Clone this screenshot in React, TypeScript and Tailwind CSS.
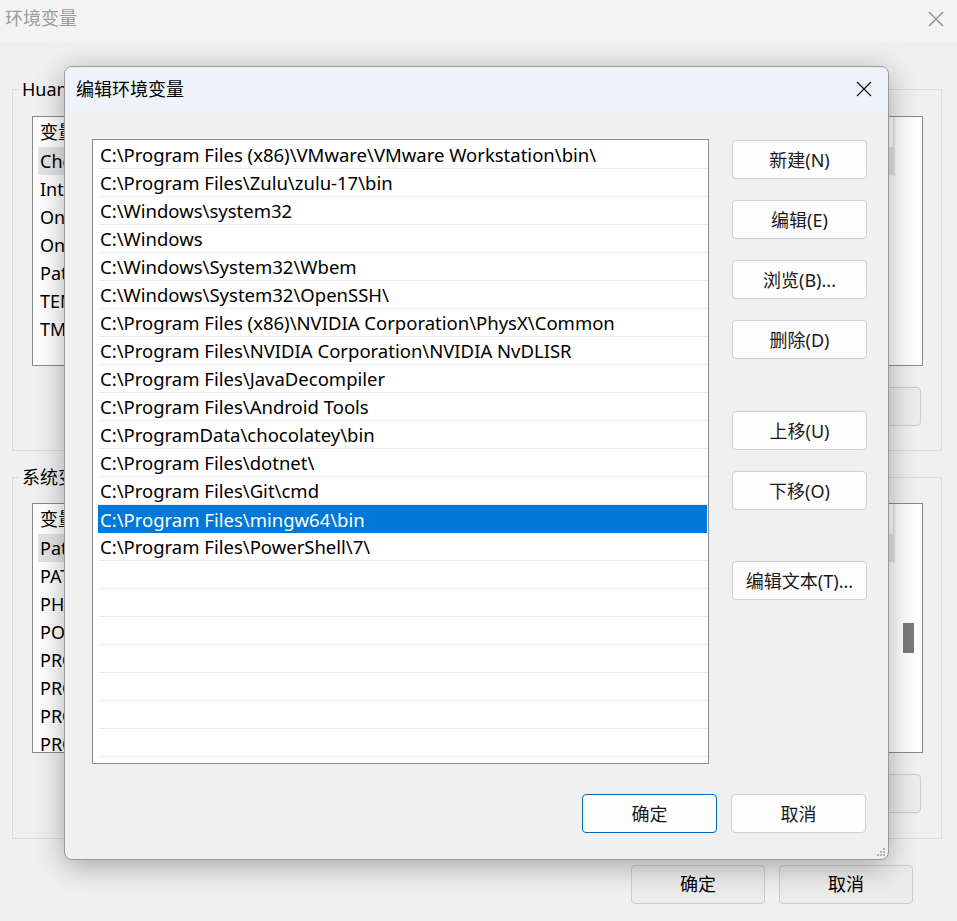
import React from "react";

const FONT = '"Microsoft YaHei UI", "Noto Sans", "Noto Sans CJK SC", sans-serif';

const paths: string[] = [
  "C:\\Program Files (x86)\\VMware\\VMware Workstation\\bin\\",
  "C:\\Program Files\\Zulu\\zulu-17\\bin",
  "C:\\Windows\\system32",
  "C:\\Windows",
  "C:\\Windows\\System32\\Wbem",
  "C:\\Windows\\System32\\OpenSSH\\",
  "C:\\Program Files (x86)\\NVIDIA Corporation\\PhysX\\Common",
  "C:\\Program Files\\NVIDIA Corporation\\NVIDIA NvDLISR",
  "C:\\Program Files\\JavaDecompiler",
  "C:\\Program Files\\Android Tools",
  "C:\\ProgramData\\chocolatey\\bin",
  "C:\\Program Files\\dotnet\\",
  "C:\\Program Files\\Git\\cmd",
  "C:\\Program Files\\mingw64\\bin",
  "C:\\Program Files\\PowerShell\\7\\",
];

const rows: string[] = [...paths, ...Array(8).fill("")];

const userVars = ["ChocolateyLastPathUpdate", "IntelliJ IDEA", "OneDrive", "OneDriveConsumer", "Path", "TEMP", "TMP"];
const sysVars = [
  "Path",
  "PATHEXT",
  "PHP_HOME",
  "POWERSHELL_DISTRIBUTION_CHANNEL",
  "PROCESSOR_ARCHITECTURE",
  "PROCESSOR_IDENTIFIER",
  "PROCESSOR_LEVEL",
  "PROCESSOR_REVISION",
];

function CloseIcon({ color, size }: { color: string; size: number }) {
  return (
    <svg width={size} height={size} viewBox="0 0 16 16" fill="none">
      <path d="M1 1L15 15M15 1L1 15" stroke={color} strokeWidth="1.3" />
    </svg>
  );
}

function BgList({ items, h }: { items: string[]; h: string }) {
  return (
    <div className={`relative w-[891px] ${h} border border-[#8a8a8a] bg-white overflow-hidden`}>
      <div className="h-[30px] flex items-center pl-[7px] text-[18px] text-black">
        <span className="w-[180px]">变量</span>
        <span>值</span>
      </div>
      <div className="absolute left-[860px] top-0 w-[2px] h-[59px] bg-[#e6e6e6]" />
      {items.map((v, i) => (
        <div
          key={i}
          className={`w-[855px] h-[28px] flex items-center ml-[5px] pl-[2px] text-[18px] text-black whitespace-nowrap ${
            i === 0 ? "bg-[#e5e5e5]" : ""
          }`}
        >
          {v}
        </div>
      ))}
    </div>
  );
}

function BgButton({ label }: { label: string }) {
  return (
    <div className="w-[134px] h-[39px] rounded-[4px] border border-[#cccccc] bg-[#ececec] flex items-center justify-center text-[18px] text-black">
      {label}
    </div>
  );
}

function DlgButton({ label, primary }: { label: string; primary?: boolean }) {
  return (
    <div
      className={`w-[135px] h-[39px] rounded-[4px] bg-[#fdfdfd] flex items-center justify-center pt-[1px] text-[18px] text-[#1a1a1a] ${
        primary ? "border border-[#0067c0]" : "border border-[#d0d0d0]"
      }`}
    >
      {label}
    </div>
  );
}

export default function App() {
  return (
    <div className="relative w-[957px] h-[921px] bg-[#f0f0f0] overflow-hidden" style={{ fontFamily: FONT }}>
      {/* Background window */}
      <div className="h-[42px] flex items-start justify-between bg-[#f3f3f3]">
        <span className="pl-[5px] pt-[5px] text-[18px] leading-[26px] text-[#9b9b9b]">环境变量</span>
        <div className="pt-[11px] pr-[13px]">
          <CloseIcon color="#8a8a8a" size={16} />
        </div>
      </div>

      <div className="px-[12px]">
        {/* Group 1 */}
        <div className="relative mt-[47px] w-[930px] h-[362px] border border-[#dcdcdc] pt-[26px] pl-[19px]">
          <span className="absolute left-[6px] -top-[14px] px-[3px] bg-[#f0f0f0] text-[18px] leading-[26px] text-black">
            HuangHao 的用户变量(U)
          </span>
          <BgList items={userVars} h="h-[250px]" />
          <div className="mt-[21px] flex justify-end gap-[14px] pr-[20px]">
            <BgButton label="新建(N)..." />
            <BgButton label="编辑(E)..." />
            <BgButton label="删除(D)" />
          </div>
        </div>

        {/* Group 2 */}
        <div className="relative mt-[26px] w-[930px] h-[362px] border border-[#dcdcdc] pt-[25px] pl-[19px]">
          <span className="absolute left-[6px] -top-[14px] px-[3px] bg-[#f0f0f0] text-[18px] leading-[26px] text-black">
            系统变量(S)
          </span>
          <div className="relative">
            <BgList items={sysVars} h="h-[250px]" />
            <div className="absolute left-[871px] top-[120px] w-[11px] h-[30px] bg-[#7a7a7a]" />
          </div>
          <div className="mt-[21px] flex justify-end gap-[14px] pr-[20px]">
            <BgButton label="新建(W)..." />
            <BgButton label="编辑(I)..." />
            <BgButton label="删除(L)" />
          </div>
        </div>

        <div className="mt-[26px] flex justify-end gap-[14px] pr-[32px]">
          <BgButton label="确定" />
          <BgButton label="取消" />
        </div>
      </div>

      {/* Dialog */}
      <div className="absolute left-[64px] top-[66px] w-[825px] h-[794px] rounded-[8px] border border-[#9a9a9a] bg-[#f0f0f0] overflow-hidden shadow-[0_6px_30px_rgba(0,0,0,0.32)] flex flex-col">
        <div className="h-[44px] shrink-0 bg-[#eef3f9] flex items-center justify-between pl-[11px] pr-[16px]">
          <span className="text-[18px] text-black">编辑环境变量</span>
          <CloseIcon color="#1a1a1a" size={16} />
        </div>
        <div className="flex pl-[27px] pt-[28px]">
          <div className="w-[617px] h-[625px] border border-[#8c8c8c] bg-white overflow-hidden pt-[1px] pl-[5px] pr-[1px]">
            {rows.map((r, i) => {
              const sel = i === 13;
              return (
                <div
                  key={i}
                  className={`h-[28px] flex items-center pl-[2px] pt-[1px] text-[18.5px] whitespace-nowrap ${
                    sel ? "bg-[#0078d7] text-white" : "text-black border-b border-[#ececec]"
                  }`}
                >
                  {r}
                </div>
              );
            })}
          </div>
          <div className="ml-[23px] pt-[1px] flex flex-col">
            <DlgButton label="新建(N)" />
            <div className="mt-[21px]">
              <DlgButton label="编辑(E)" />
            </div>
            <div className="mt-[21px]">
              <DlgButton label="浏览(B)..." />
            </div>
            <div className="mt-[21px]">
              <DlgButton label="删除(D)" />
            </div>
            <div className="mt-[52px]">
              <DlgButton label="上移(U)" />
            </div>
            <div className="mt-[21px]">
              <DlgButton label="下移(O)" />
            </div>
            <div className="mt-[51px]">
              <DlgButton label="编辑文本(T)..." />
            </div>
          </div>
        </div>
        <div className="flex justify-end gap-[14px] pr-[22px] mt-[30px]">
          <DlgButton label="确定" primary />
          <DlgButton label="取消" />
        </div>
        <div className="absolute right-[3px] bottom-[3px] grid grid-cols-3 gap-[1px]">
          <span className="w-[2px] h-[2px]" />
          <span className="w-[2px] h-[2px]" />
          <span className="w-[2px] h-[2px] bg-[#b0b0b0]" />
          <span className="w-[2px] h-[2px]" />
          <span className="w-[2px] h-[2px] bg-[#b0b0b0]" />
          <span className="w-[2px] h-[2px] bg-[#b0b0b0]" />
          <span className="w-[2px] h-[2px] bg-[#b0b0b0]" />
          <span className="w-[2px] h-[2px] bg-[#b0b0b0]" />
          <span className="w-[2px] h-[2px] bg-[#b0b0b0]" />
        </div>
      </div>
    </div>
  );
}
